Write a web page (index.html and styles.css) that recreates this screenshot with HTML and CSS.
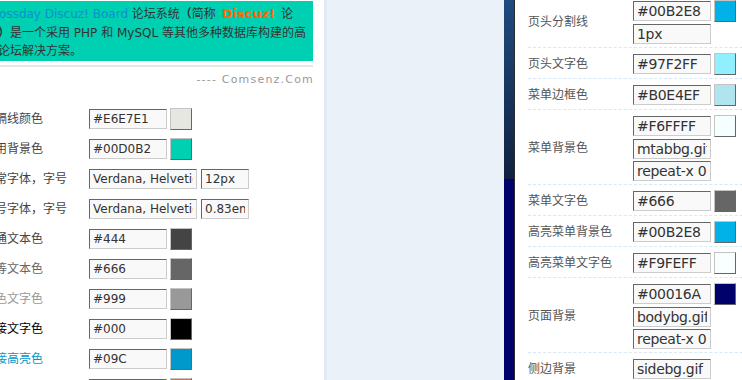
FILE: index.html
```html
<!DOCTYPE html>
<html lang="zh-CN">
<head>
<meta charset="utf-8">
<title>Discuz! 风格设置</title>
<link rel="stylesheet" href="styles.css">
</head>
<body>
<div class="page">
  <section class="left">
    <div class="left-inner">
      <div class="intro">
        <p><a class="link">Crossday Discuz! Board</a> 论坛系统<span class="cjk">（</span>简称 <b class="brand">Discuz!</b> 论<br>坛<span class="cjk">）</span>是一个采用 PHP 和 MySQL 等其他多种数据库构建的高<br>效论坛解决方案。</p>
      </div>
      <div class="rule"></div>
      <div class="sign">---- Comsenz.Com</div>
      <div class="form">
        <div class="frow"><span class="flabel">分隔线颜色</span><div class="line"><input class="fin" type="text" value="#E6E7E1"><span class="sw sw-e6e7e1"></span></div></div>
        <div class="frow"><span class="flabel">通用背景色</span><div class="line"><input class="fin" type="text" value="#00D0B2"><span class="sw sw-00d0b2"></span></div></div>
        <div class="frow"><span class="flabel">正常字体，字号</span><div class="line"><input class="fin fin-wide" type="text" value="Verdana, Helvetica, Arial"><input class="fin fin-small" type="text" value="12px"></div></div>
        <div class="frow"><span class="flabel">小号字体，字号</span><div class="line"><input class="fin fin-wide" type="text" value="Verdana, Helvetica, Arial"><input class="fin fin-small" type="text" value="0.83em"></div></div>
        <div class="frow"><span class="flabel">普通文本色</span><div class="line"><input class="fin" type="text" value="#444"><span class="sw sw-444"></span></div></div>
        <div class="frow"><span class="flabel c-666">中等文本色</span><div class="line"><input class="fin" type="text" value="#666"><span class="sw sw-666"></span></div></div>
        <div class="frow"><span class="flabel c-999">浅色文字色</span><div class="line"><input class="fin" type="text" value="#999"><span class="sw sw-999"></span></div></div>
        <div class="frow"><span class="flabel c-000">链接文字色</span><div class="line"><input class="fin" type="text" value="#000"><span class="sw sw-000"></span></div></div>
        <div class="frow"><span class="flabel c-09c">链接高亮色</span><div class="line"><input class="fin" type="text" value="#09C"><span class="sw sw-09c"></span></div></div>
        <div class="frow"><span class="flabel c-f60">醒目文字色</span><div class="line"><input class="fin" type="text" value="#F60"><span class="sw sw-f60"></span></div></div>
      </div>
    </div>
  </section>

  <section class="gutter"></section>

  <section class="preview">
    <div class="strip"><div class="strip-top"></div></div>
    <div class="right">
      <div class="rrow rrow-first">
        <span class="rlabel">页头分割线</span>
        <div class="vals">
          <div class="line"><input class="rin" type="text" value="#00B2E8"><span class="sw sw-00b2e8"></span></div>
          <div class="line"><input class="rin" type="text" value="1px"></div>
        </div>
      </div>
      <div class="rrow">
        <span class="rlabel">页头文字色</span>
        <div class="vals"><div class="line"><input class="rin" type="text" value="#97F2FF"><span class="sw sw-97f2ff"></span></div></div>
      </div>
      <div class="rrow">
        <span class="rlabel">菜单边框色</span>
        <div class="vals"><div class="line"><input class="rin" type="text" value="#B0E4EF"><span class="sw sw-b0e4ef"></span></div></div>
      </div>
      <div class="rrow">
        <span class="rlabel">菜单背景色</span>
        <div class="vals">
          <div class="line"><input class="rin" type="text" value="#F6FFFF"><span class="sw sw-f6ffff"></span></div>
          <div class="line"><input class="rin" type="text" value="mtabbg.gif"></div>
          <div class="line"><input class="rin" type="text" value="repeat-x 0 100%"></div>
        </div>
      </div>
      <div class="rrow">
        <span class="rlabel">菜单文字色</span>
        <div class="vals"><div class="line"><input class="rin" type="text" value="#666"><span class="sw sw-666"></span></div></div>
      </div>
      <div class="rrow">
        <span class="rlabel">高亮菜单背景色</span>
        <div class="vals"><div class="line"><input class="rin" type="text" value="#00B2E8"><span class="sw sw-00b2e8"></span></div></div>
      </div>
      <div class="rrow">
        <span class="rlabel">高亮菜单文字色</span>
        <div class="vals"><div class="line"><input class="rin" type="text" value="#F9FEFF"><span class="sw sw-f9feff"></span></div></div>
      </div>
      <div class="rrow">
        <span class="rlabel">页面背景</span>
        <div class="vals">
          <div class="line"><input class="rin" type="text" value="#00016A"><span class="sw sw-00016a"></span></div>
          <div class="line"><input class="rin" type="text" value="bodybg.gif"></div>
          <div class="line"><input class="rin" type="text" value="repeat-x 0 90px"></div>
        </div>
      </div>
      <div class="rrow">
        <span class="rlabel">侧边背景</span>
        <div class="vals"><div class="line"><input class="rin" type="text" value="sidebg.gif"></div></div>
      </div>
    </div>
  </section>
</div>
</body>
</html>
```

FILE: styles.css
```css
* { box-sizing: border-box; }

html, body {
  margin: 0;
  padding: 0;
  height: 100%;
  overflow: hidden;
}

body {
  font-family: "DejaVu Sans", "Noto Sans CJK SC", sans-serif;
  font-size: 12px;
  color: #444;
  background: #fff;
}

.page {
  display: flex;
  height: 380px;
  overflow: hidden;
}

/* ---------- left panel ---------- */
.left {
  flex: none;
  width: 324px;
  background: #fff;
  overflow: hidden;
}

.left-inner {
  margin-left: -20px;
  width: 333px;
}

.intro {
  margin-top: 1px;
  background: #00d0b2;
  padding: 3px 0 1px 6px;
  white-space: nowrap;
  overflow: hidden;
}

.intro p {
  margin: 0;
  line-height: 18px;
  color: #333;
}

.cjk {
  font-family: "Noto Sans CJK SC", sans-serif;
  font-weight: bold;
}

.link { color: #0a8fd0; }

.brand {
  color: #ff6600;
  font-weight: bold;
  font-size: 13px;
  margin: 0 2px;
}

.rule {
  margin-top: 4px;
  height: 2px;
  background: #e6e7e1;
}

.sign {
  margin-top: 6px;
  text-align: right;
  font-size: 11px;
  line-height: 14px;
  letter-spacing: 1.2px;
  margin-right: -1px;
  color: #999;
}

.form {
  margin-top: 17px;
}

.frow {
  display: flex;
  align-items: center;
  padding: 4px 0 4px 3px;
}

.flabel {
  flex: none;
  width: 106px;
  white-space: nowrap;
  color: #444;
  font-family: "Noto Sans CJK SC", sans-serif;
  font-size: 12px;
  line-height: 14px;
  padding-bottom: 3px;
}

.c-666 { color: #666; }
.c-999 { color: #999; }
.c-000 { color: #000; }
.c-09c { color: #0099cc; }
.c-f60 { color: #ff6600; }

.line {
  display: flex;
  align-items: center;
  gap: 3px;
  min-height: 22px;
}

.vals .line { min-height: 20px; }
.vals .line:first-child { min-height: 22px; }

input {
  margin: 0;
  height: 20px;
  padding: 0 3px;
  border: 1px solid;
  border-color: #666 #ccc #ccc #666;
  background: #f9f9f9;
  color: #333;
  font-family: "DejaVu Sans", sans-serif;
  outline: none;
}

.fin {
  width: 78px;
  font-size: 12px;
}

.fin-wide { width: 108px; }
.fin-small { width: 48px; margin-left: 1px; }

.sw {
  flex: none;
  display: block;
  width: 22px;
  height: 22px;
  border: 1px solid;
  border-color: #c4c4c4 #666 #666 #c4c4c4;
}

.sw-e6e7e1 { background: #e6e7e1; }
.sw-00d0b2 { background: #00d0b2; }
.sw-444 { background: #444; }
.sw-666 { background: #666; }
.sw-999 { background: #999; }
.sw-000 { background: #000; }
.sw-09c { background: #0099cc; }
.sw-f60 { background: #ff6600; }
.sw-00b2e8 { background: #00b2e8; }
.sw-97f2ff { background: #90f0ff; }
.sw-b0e4ef { background: #b0e4ef; }
.sw-f6ffff { background: #f6ffff; }
.sw-f9feff { background: #f9feff; }
.sw-00016a { background: #00016a; }

/* ---------- middle gutter ---------- */
.gutter {
  flex: none;
  width: 180px;
  background: #eaf1f9;
  border-left: 3px solid #e2ebf5;
}

/* ---------- preview ---------- */
.preview {
  flex: 1;
  display: flex;
  min-width: 0;
}

.strip {
  flex: none;
  width: 11px;
  background: #00016a;
  border-right: 1px solid #2b2b2b;
}

.strip-top {
  height: 179px;
  background: linear-gradient(#1f4b7e, #10213f);
}

.right {
  flex: 1;
  min-width: 0;
  background: #fff;
  padding-left: 13px;
  overflow: hidden;
}

.rrow {
  display: flex;
  align-items: center;
  padding: 5px 0 3px;
  border-bottom: 1px dashed #d6e8f6;
  width: 260px;
}

.rrow-first { margin-top: -5px; }

.rlabel {
  flex: none;
  width: 105px;
  white-space: nowrap;
  color: #555;
  font-family: "Noto Sans CJK SC", sans-serif;
  font-size: 12px;
  line-height: 14px;
  padding-bottom: 3px;
}

.vals {
  display: flex;
  flex-direction: column;
  gap: 2px;
}

.rin {
  width: 78px;
  font-size: 14px;
  letter-spacing: -0.3px;
}
```
